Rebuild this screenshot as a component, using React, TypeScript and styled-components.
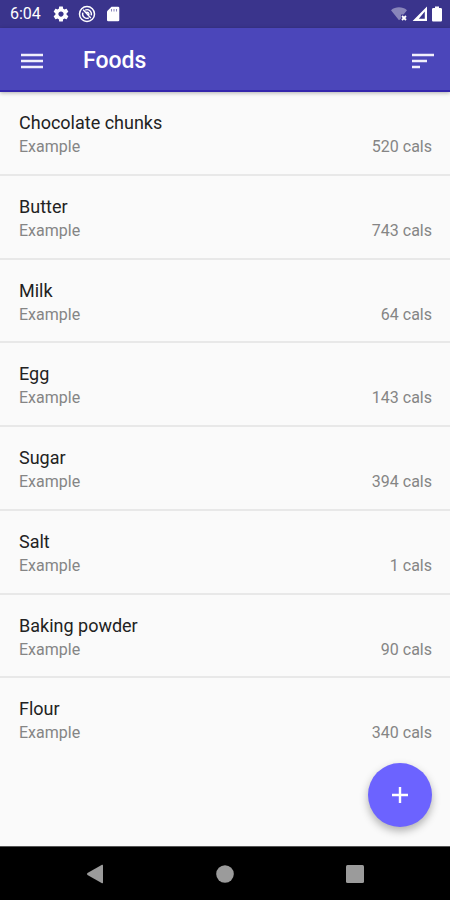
import React from "react";
import styled, { createGlobalStyle } from "styled-components";

const GlobalStyle = createGlobalStyle`
  *, *::before, *::after { box-sizing: border-box; }
  body {
    margin: 0;
    background: #fafafa;
    font-family: Roboto, "Liberation Sans", sans-serif;
  }
`;

const Screen = styled.div`
  display: flex;
  flex-direction: column;
  min-height: 100vh;
`;

const StatusBar = styled.div`
  display: flex;
  align-items: center;
  justify-content: space-between;
  height: 28px;
  padding: 0 7px 0 10px;
  background: #3a348c;
  color: #fff;
`;

const StatusGroup = styled.div<{ $gap: number }>`
  display: flex;
  align-items: center;
  gap: ${(p) => p.$gap}px;
`;

const Clock = styled.time`
  margin-right: 3px;
  font-size: 16px;
  line-height: 20px;
`;

const AppBar = styled.header`
  position: relative;
  display: flex;
  align-items: center;
  height: 64px;
  padding: 3px 7px 0 12px;
  background: #4b46ba;
  border-bottom: 2px solid #3426ac;
  box-shadow: 0 1px 4px rgba(0, 0, 0, 0.3);
  color: #fff;
`;

const IconButton = styled.button`
  display: grid;
  place-items: center;
  width: 40px;
  height: 40px;
  padding: 0;
  border: 0;
  background: none;
  color: #f1effc;
  cursor: pointer;
`;

const Title = styled.h1`
  flex: 1;
  margin: 0 0 0 31px;
  font-size: 23px;
  font-weight: 500;
  line-height: 34px;
`;

const Main = styled.main`
  position: relative;
  display: flex;
  flex: 1;
  padding-bottom: 84px;
`;

const FoodList = styled.ul`
  display: grid;
  flex: 1;
  grid-auto-rows: 1fr;
  margin: 0;
  padding: 0;
  list-style: none;
`;

const FoodRow = styled.li`
  padding: 18px 18px 12px 19px;
  border-bottom: 2px solid #e8e8e8;

  &:last-child { border-bottom-color: transparent; }
`;

const FoodName = styled.div`
  color: #222;
  font-size: 18px;
  line-height: 25px;
`;

const Details = styled.div`
  display: flex;
  justify-content: space-between;
  color: #858585;
  font-size: 16px;
  line-height: 24px;
`;

const AddButton = styled.button`
  position: absolute;
  right: 18px;
  bottom: 19px;
  display: grid;
  place-items: center;
  width: 64px;
  height: 64px;
  padding: 0;
  border: 0;
  border-radius: 50%;
  background: #6c63ff;
  box-shadow: 0 4px 8px rgba(0, 0, 0, 0.3);
  color: #fff;
  cursor: pointer;
`;

const NavBar = styled.nav`
  display: flex;
  align-items: center;
  justify-content: space-evenly;
  height: 54px;
  background: #000;
  border-top: 1px solid #555;
`;

const NavButton = styled.button`
  display: grid;
  place-items: center;
  width: 44px;
  height: 44px;
  margin: 0 13px;
  padding: 0;
  border: 0;
  background: none;
  color: #9b9b9b;
  cursor: pointer;
`;

const foods = [
  { name: "Chocolate chunks", cals: 520 },
  { name: "Butter", cals: 743 },
  { name: "Milk", cals: 64 },
  { name: "Egg", cals: 143 },
  { name: "Sugar", cals: 394 },
  { name: "Salt", cals: 1 },
  { name: "Baking powder", cals: 90 },
  { name: "Flour", cals: 340 },
];

const GearIcon = () => (
  <svg width="18" height="18" viewBox="0 0 24 24" fill="currentColor" aria-hidden="true">
    <path d="M19.43 12.98c.04-.32.07-.64.07-.98s-.03-.66-.07-.98l2.11-1.65c.19-.15.24-.42.12-.64l-2-3.46c-.12-.22-.39-.3-.61-.22l-2.49 1c-.52-.4-1.08-.73-1.69-.98l-.38-2.65C14.46 2.18 14.25 2 14 2h-4c-.25 0-.46.18-.49.42l-.38 2.65c-.61.25-1.17.59-1.69.98l-2.49-1c-.23-.09-.49 0-.61.22l-2 3.46c-.13.22-.07.49.12.64l2.11 1.65c-.04.32-.07.65-.07.98s.03.66.07.98l-2.11 1.65c-.19.15-.24.42-.12.64l2 3.46c.12.22.39.3.61.22l2.49-1c.52.4 1.08.73 1.69.98l.38 2.65c.03.24.24.42.49.42h4c.25 0 .46-.18.49-.42l.38-2.65c.61-.25 1.17-.59 1.69-.98l2.49 1c.23.09.49 0 .61-.22l2-3.46c.12-.22.07-.49-.12-.64l-2.11-1.65zM12 15.5c-1.93 0-3.5-1.57-3.5-3.5s1.57-3.5 3.5-3.5 3.5 1.57 3.5 3.5-1.57 3.5-3.5 3.5z" />
  </svg>
);

const SyncDisabledIcon = () => (
  <svg width="18" height="18" viewBox="0 0 18 18" fill="none" stroke="currentColor" aria-hidden="true">
    <circle cx="9" cy="9" r="7.5" strokeWidth="1.5" />
    <path d="M5.2 4.8 12.8 13M7.2 5.1a4.4 4.4 0 0 1 6 5.3M10.8 12.9a4.4 4.4 0 0 1-6-5.3M8.3 7.4a2 2 0 0 1 2.6 2.4" strokeWidth="1.4" />
  </svg>
);

const SdCardIcon = () => (
  <svg width="18" height="18" viewBox="0 0 18 18" aria-hidden="true">
    <path fill="currentColor" d="M7.5 1.8H14a1.3 1.3 0 0 1 1.3 1.3v11.8a1.3 1.3 0 0 1-1.3 1.3H4.3A1.3 1.3 0 0 1 3 14.9V6.3z" />
    <path stroke="#3a348c" strokeOpacity=".6" d="M7.5 4v2.500M10 4v2.500M12.500 4v2.500" />
  </svg>
);

const WifiIcon = () => (
  <svg width="18" height="18" viewBox="0 0 18 18" aria-hidden="true">
    <path d="M0 5.200C4.600 1.400 11.400 1.400 16 5.200L12.600 9.600H10v4L8 15.200z" fill="#fff" fillOpacity=".4" />
    <path d="m11 11 4 4m0-4-4 4" stroke="#fff" strokeWidth="1.8" />
  </svg>
);

const SignalIcon = () => (
  <svg width="16" height="18" viewBox="0 0 16 18" aria-hidden="true">
    <path fill="#fff" fillRule="evenodd" d="M15 1.600V16H.600zM12.800 6.400v7.400H6.800z" />
  </svg>
);

const BatteryIcon = () => (
  <svg width="12" height="18" viewBox="0 0 12 18" fill="currentColor" aria-hidden="true">
    <path d="M4 1.500h4V3h1.700c.7 0 1.300.6 1.300 1.300v10.900c0 .7-.6 1.300-1.300 1.300H2.300c-.7 0-1.300-.6-1.300-1.300V4.300C1 3.600 1.600 3 2.300 3H4z" />
  </svg>
);

export default function App() {
  return (
    <Screen>
      <GlobalStyle />
      <StatusBar>
        <StatusGroup $gap={8}>
          <Clock>6:04</Clock>
          <GearIcon />
          <SyncDisabledIcon />
          <SdCardIcon />
        </StatusGroup>
        <StatusGroup $gap={3}>
          <WifiIcon />
          <SignalIcon />
          <BatteryIcon />
        </StatusGroup>
      </StatusBar>
      <AppBar>
        <IconButton aria-label="Open menu">
          <svg width="22" height="16" viewBox="0 0 22 16" stroke="currentColor" strokeWidth="2.4" aria-hidden="true">
            <path d="M0 2h22M0 8h22M0 14h22" />
          </svg>
        </IconButton>
        <Title>Foods</Title>
        <IconButton aria-label="Sort foods">
          <svg width="22" height="16" viewBox="0 0 22 16" stroke="currentColor" strokeWidth="2.4" aria-hidden="true">
            <path d="M0 2h22M0 8h15M0 14h8" />
          </svg>
        </IconButton>
      </AppBar>
      <Main>
        <FoodList>
          {foods.map((food) => (
            <FoodRow key={food.name}>
              <FoodName>{food.name}</FoodName>
              <Details>
                <span>Example</span>
                <span>{food.cals} cals</span>
              </Details>
            </FoodRow>
          ))}
        </FoodList>
        <AddButton aria-label="Add food">
          <svg width="18" height="18" viewBox="0 0 18 18" stroke="currentColor" strokeWidth="2.4" aria-hidden="true">
            <path d="M9 1v16M1 9h16" />
          </svg>
        </AddButton>
      </Main>
      <NavBar aria-label="System">
        <NavButton aria-label="Back">
          <svg width="20" height="20" viewBox="0 0 20 20" fill="currentColor" aria-hidden="true">
            <path d="M17 .8q1-.4 1 .7v17q0 1.100-1 .7L2.500 10.900q-1.200-.9 0-1.800z" />
          </svg>
        </NavButton>
        <NavButton aria-label="Home">
          <svg width="18" height="18" viewBox="0 0 18 18" fill="currentColor" aria-hidden="true">
            <circle cx="9" cy="9" r="8.800" />
          </svg>
        </NavButton>
        <NavButton aria-label="Recent apps">
          <svg width="20" height="20" viewBox="0 0 20 20" fill="currentColor" aria-hidden="true">
            <rect x="1" y="1" width="18" height="18" rx="1.500" />
          </svg>
        </NavButton>
      </NavBar>
    </Screen>
  );
}
